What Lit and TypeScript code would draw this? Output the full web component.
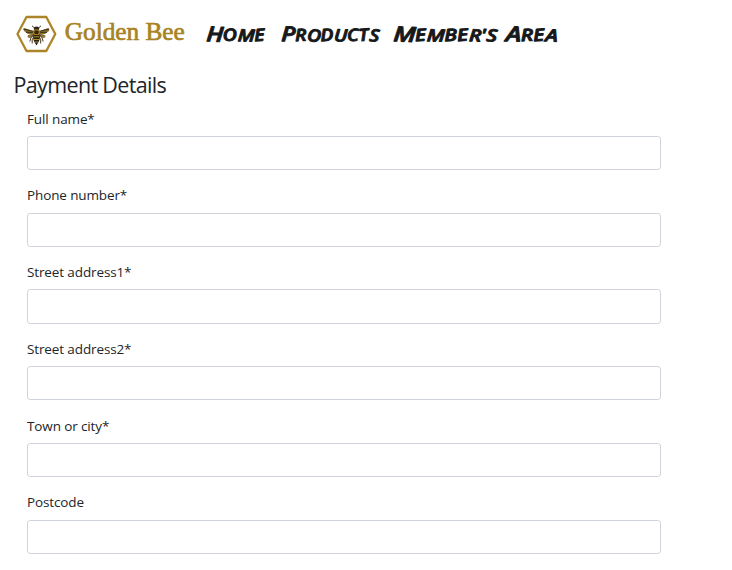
import { LitElement, html, svg, css } from "lit";
import { customElement, property } from "lit/decorators.js";

@customElement("brand-logo")
class BrandLogo extends LitElement {
  static styles = css`
    :host { display: block; width: 176px; height: 42px; }
    svg { display: block; }
    .name { font-family: "Liberation Serif", serif; font-size: 25.5px; fill: #a88425; stroke: #a88425; stroke-width: 0.7; }
  `;
  render() {
    return html`<svg width="176" height="42" viewBox="14 13 176 42">
      <path d="M26.5 17H46.3L55.3 34L46.3 51H26.5L17.5 34Z" fill="#fff" stroke="#ad8529" stroke-width="2.3" stroke-linejoin="round"/>
      <g>
        <path d="M34.5 31.5L25 28.3Q22.5 28 24 31L28 34L34 34Z" fill="#8b7434"/>
        <path d="M38.5 31.5L47.5 28.3Q50 28 49 31L45 34L39 34Z" fill="#8b7434"/>
        <path d="M34.5 33L28 35Q26.5 38 30 38L35 35ZM38.5 33L45 35Q46.5 38 43 38L38 35Z" fill="#8b7434"/>
        <path d="M34 31.5L23.5 29M34.5 32.5L26 32.2M39 31.5L49 29M38.5 32.5L47 32.2" stroke="#3b3018" stroke-width="1.1" fill="none"/>
        <path d="M34.5 28L32 25.8M38.5 28L41 25.8M34 34L31 37.8L29.8 41.5M39 34L42 37.8L43.2 41.5M34 36L32.2 39.8V43.5M39 36L40.7 39.8V43.5" stroke="#443923" stroke-width="1" fill="none"/>
        <ellipse cx="36.5" cy="28.6" rx="2.7" ry="2.2" fill="#302717"/>
        <ellipse cx="36.5" cy="32.2" rx="3.7" ry="3" fill="#a47e1c"/>
        <path d="M34 31.8Q36.5 28.8 39 31.8L38 34H35Z" fill="#30250f"/>
        <path d="M33.5 35H39.5Q41 39 36.5 45.5Q32 39 33.5 35Z" fill="#292113"/>
        <path d="M33.8 36.8H39.2M34 39.5H39M35 42H38" stroke="#c19b2b" stroke-width=".9"/>
      </g>
      <text class="name" x="64.8" y="40.3" textLength="120" lengthAdjust="spacingAndGlyphs">Golden Bee</text>
    </svg>`;
  }
}

const words = [
  { initial: "H", rest: "ome", x: 206, width: 59, tilt: "3 -4 2 -4" },
  { initial: "P", rest: "roducts", x: 281, width: 98, tilt: "2 -3 3 -4 2 -3 -5 3" },
  { initial: "M", rest: "ember's", x: 393, width: 104, tilt: "3 -4 2 -3 -5 2 0 3" },
  { initial: "A", rest: "rea", x: 505.5, width: 52, tilt: "2 -3 -4 3" },
];

@customElement("main-nav")
class MainNav extends LitElement {
  static styles = css`
    :host { display: block; width: 364px; height: 42px; }
    svg { display: block; }
    text { font-family: "Open Sans", "Noto Sans", sans-serif; font-weight: 600; font-style: italic; font-size: 17px; fill: #161819; stroke: #161819; stroke-width: 0.9; stroke-linejoin: round; }
    .initial { font-size: 21px; }
    .rest { text-transform: uppercase; }
  `;
  render() {
    return html`<svg width="364" height="42" viewBox="202 13 364 42">
      ${words.map(w => svg`<text x=${w.x} y="41.3" rotate=${w.tilt} textLength=${w.width} lengthAdjust="spacingAndGlyphs"><tspan class="initial">${w.initial}</tspan><tspan class="rest">${w.rest}</tspan></text>`)}
    </svg>`;
  }
}

@customElement("form-field")
class FormField extends LitElement {
  @property() label = "";
  static styles = css`
    :host { display: block; height: 76.75px; }
    label { display: block; height: 27.4px; line-height: 20px; font-size: 13.5px; letter-spacing: -0.12px; color: #212529; }
    input { display: block; box-sizing: border-box; width: 634px; height: 34.25px; margin: 0; padding: 4px 8px; border: 1px solid #ced4da; border-radius: 3.2px; background: #fff; font: inherit; outline: none; }
  `;
  render() {
    return html`<label for="field">${this.label}</label><input id="field" type="text">`;
  }
}

@customElement("app-root")
class AppRoot extends LitElement {
  static styles = css`
    :host { display: block; box-sizing: border-box; height: 570px; overflow: hidden; background: #fff; color: #212529; font-family: "Open Sans", "Noto Sans", sans-serif; }
    header { display: flex; gap: 12px; padding: 13px 14px 0; height: 57px; }
    h1 { margin: 0; padding-left: 13.5px; height: 38.5px; line-height: 30px; font-size: 21.5px; font-weight: 400; letter-spacing: -0.65px; white-space: nowrap; }
    form { padding-left: 27px; }
  `;
  render() {
    const fields = ["Full name*", "Phone number*", "Street address1*", "Street address2*", "Town or city*", "Postcode"];
    return html`
      <header><brand-logo></brand-logo><main-nav></main-nav></header>
      <h1>Payment Details</h1>
      <form>${fields.map(f => html`<form-field label=${f}></form-field>`)}</form>`;
  }
}
